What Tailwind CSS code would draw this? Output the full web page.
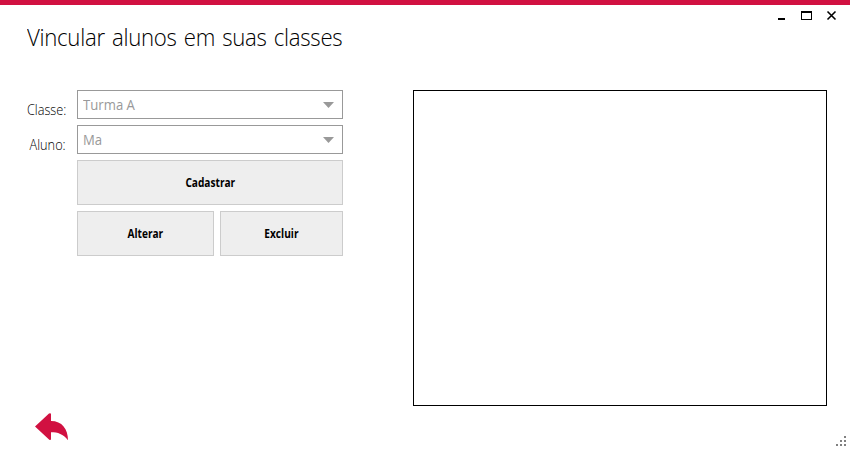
<!DOCTYPE html>
<html lang="pt-BR">
<head>
<meta charset="utf-8">
<title>Vincular alunos em suas classes</title>
<script src="https://cdn.jsdelivr.net/npm/@tailwindcss/browser@4"></script>
</head>
<body class="bg-white overflow-hidden">
<div class="relative flex h-[450px] w-[850px] flex-col border-t-[5px] border-[#d11141] bg-white font-['Open_Sans','Noto_Sans',sans-serif] text-black">
  <header class="flex h-[85px] items-start justify-between pl-[27px] pr-[13px]">
    <h1 class="mt-4 origin-left scale-x-[0.925] text-[24px] leading-8 font-light whitespace-nowrap tracking-[-0.3px] [word-spacing:1.8px]">Vincular alunos em suas classes</h1>
    <svg class="mt-[5px] h-3 w-[60px]" viewBox="0 0 60 12" shape-rendering="crispEdges">
      <path d="M1 8h7v2H1z"/>
      <path fill-rule="evenodd" d="M24 1h11v9H24zM25 3v6h9V3z"/>
      <path d="M50.5 1.5l8 8M58.5 1.5l-8 8" fill="none" stroke="#000" stroke-width="1.6" shape-rendering="auto"/>
    </svg>
  </header>
  <main class="flex pr-[23px]">
    <form class="flex w-[343px] flex-col gap-1.5">
      <div class="flex h-[29px]">
        <label class="w-[77px] pr-[11px] pt-[10px] text-right text-[14px] leading-5 font-light"><span class="inline-block origin-right scale-x-[0.91]">Classe:</span></label>
        <div class="flex h-[29px] flex-1 items-center justify-between border border-[#999] pl-[5px] pr-2 text-[14px] text-[#999]">
          <span class="origin-left scale-x-[0.94]">Turma A</span>
          <svg class="h-1.5 w-[11px]" viewBox="0 0 11 6"><path d="M0 0h11L5.5 6z" fill="#999"/></svg>
        </div>
      </div>
      <div class="flex h-[29px]">
        <label class="w-[77px] pr-[11px] pt-[10px] text-right text-[14px] leading-5 font-light"><span class="inline-block origin-right scale-x-[0.91]">Aluno:</span></label>
        <div class="flex h-[29px] flex-1 items-center justify-between border border-[#999] pl-[5px] pr-2 text-[14px] text-[#999]">
          <span class="origin-left scale-x-[0.94]">Ma</span>
          <svg class="h-1.5 w-[11px]" viewBox="0 0 11 6"><path d="M0 0h11L5.5 6z" fill="#999"/></svg>
        </div>
      </div>
      <div class="flex flex-col gap-1.5 pl-[77px] text-[11.5px] font-bold">
        <button type="button" class="h-[45px] border border-[#ccc] bg-[#eee]"><span class="inline-block scale-x-[0.88]">Cadastrar</span></button>
        <div class="flex gap-1.5">
          <button type="button" class="h-[45px] w-[137px] border border-[#ccc] bg-[#eee]"><span class="inline-block scale-x-[0.88]">Alterar</span></button>
          <button type="button" class="h-[45px] flex-1 border border-[#ccc] bg-[#eee]"><span class="inline-block scale-x-[0.88]">Excluir</span></button>
        </div>
      </div>
    </form>
    <div class="ml-[70px] h-[316px] flex-1 border border-black"></div>
  </main>
  <footer class="flex flex-1 items-end justify-between pb-1 pl-[35px] pr-1">
    <svg class="mb-[5px] h-7 w-[34px]" viewBox="0 0 34 28"><path d="M0 13.5L14 0.5Q16 -0.5 16 1.5V8C27 8 33 16 33 27.2C28 21 23 19.3 16 19.3V25.8Q16 27.8 14 26.5Z" fill="#d11141"/></svg>
    <svg class="h-2.5 w-2.5" viewBox="0 0 10 10" fill="#808080" shape-rendering="crispEdges"><path d="M8 0h2v2H8zM4 4h2v2H4zM8 4h2v2H8zM0 8h2v2H0zM4 8h2v2H4zM8 8h2v2H8z"/></svg>
  </footer>
</div>
</body>
</html>
